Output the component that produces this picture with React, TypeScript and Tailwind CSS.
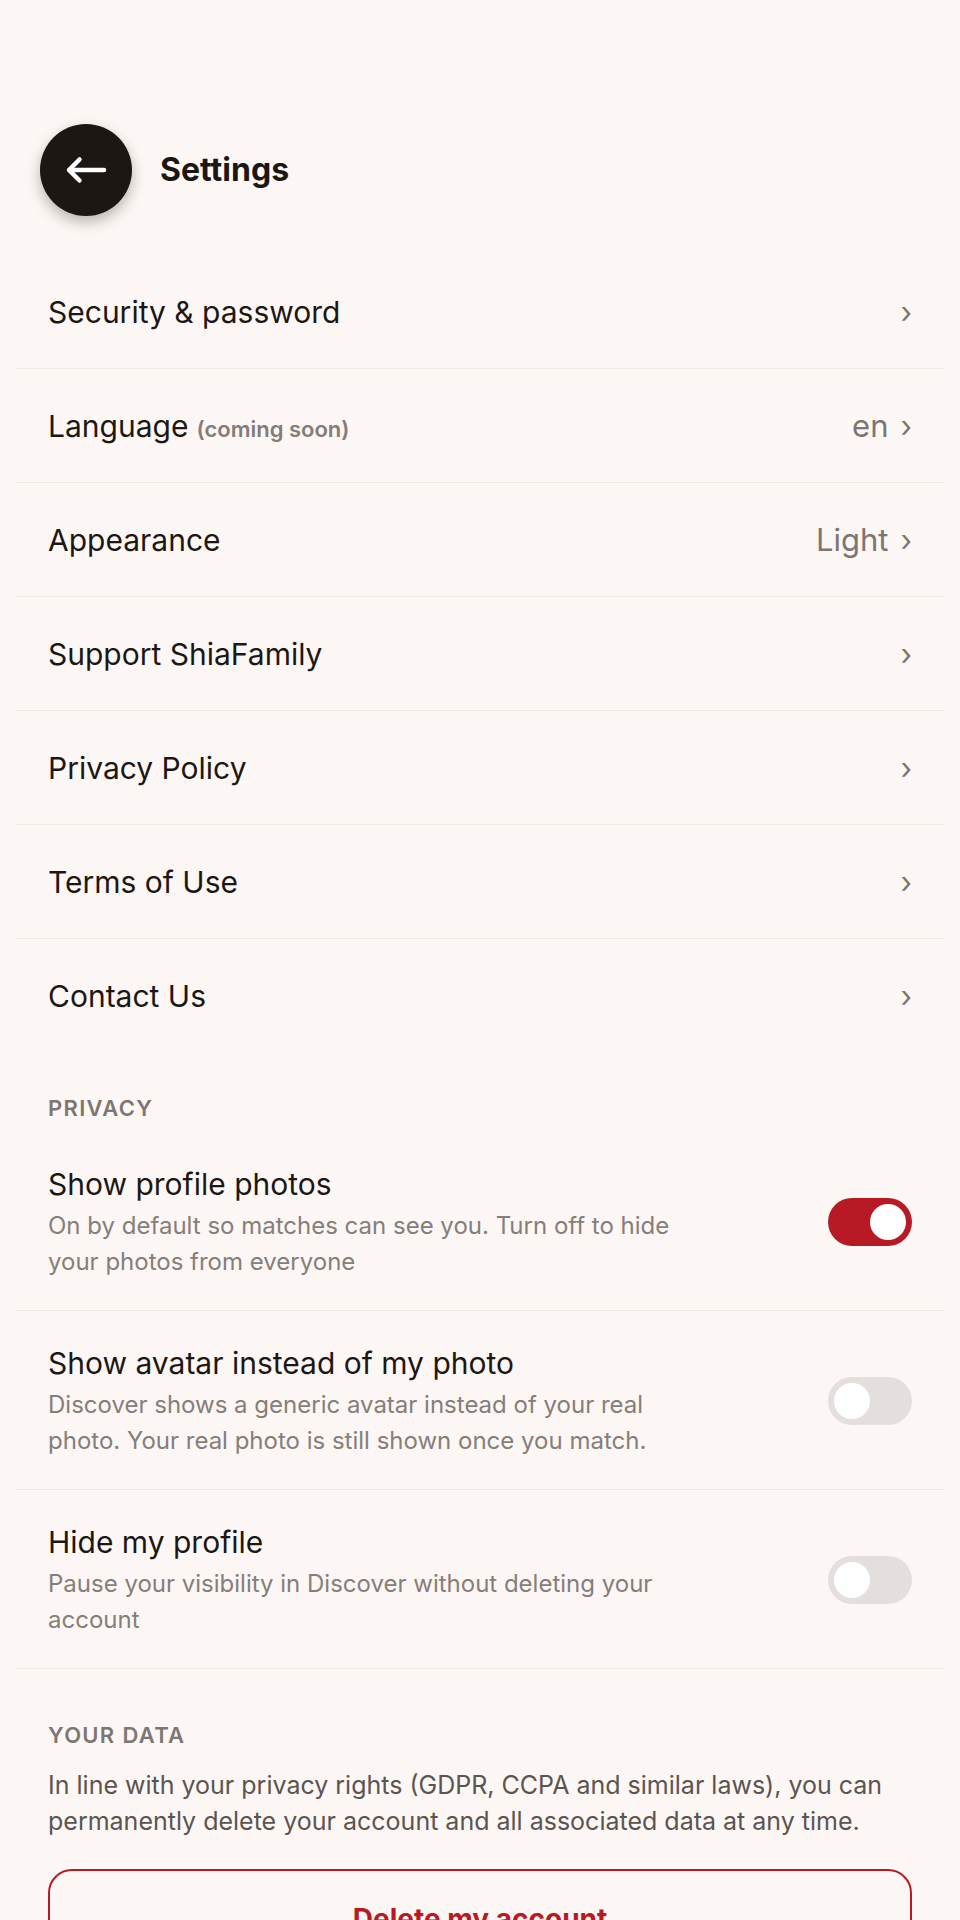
import { useState } from "react";

type NavItem = {
  label: string;
  note?: string;
  value?: string;
};

const navItems: NavItem[] = [
  { label: "Security & password" },
  { label: "Language", note: "(coming soon)", value: "en" },
  { label: "Appearance", value: "Light" },
  { label: "Support ShiaFamily" },
  { label: "Privacy Policy" },
  { label: "Terms of Use" },
  { label: "Contact Us" },
];

type PrivacyItem = {
  key: string;
  title: string;
  description: string;
};

const privacyItems: PrivacyItem[] = [
  {
    key: "photos",
    title: "Show profile photos",
    description:
      "On by default so matches can see you. Turn off to hide your photos from everyone",
  },
  {
    key: "avatar",
    title: "Show avatar instead of my photo",
    description:
      "Discover shows a generic avatar instead of your real photo. Your real photo is still shown once you match.",
  },
  {
    key: "hide",
    title: "Hide my profile",
    description:
      "Pause your visibility in Discover without deleting your account",
  },
];

function Toggle({ on, onChange }: { on: boolean; onChange: () => void }) {
  return (
    <button
      onClick={onChange}
      className={`flex h-12 w-[84px] shrink-0 items-center rounded-full p-1.5 ${
        on ? "justify-end bg-[#b71a25]" : "justify-start bg-[#e4dfdd]"
      }`}
    >
      <span className="h-9 w-9 rounded-full bg-white" />
    </button>
  );
}

export default function App() {
  const [toggles, setToggles] = useState<Record<string, boolean>>({
    photos: true,
    avatar: false,
    hide: false,
  });

  const flip = (k: string) => setToggles((t) => ({ ...t, [k]: !t[k] }));

  return (
    <div className="min-h-screen bg-[#fcf7f4] font-['Inter','Noto_Sans',sans-serif] text-[#1c1715]">
      <div className="flex items-center gap-7 pl-10 pt-[124px]">
        <button className="flex h-[92px] w-[92px] items-center justify-center rounded-full bg-[#1d1714] shadow-[0_6px_14px_rgba(40,25,20,0.3)]">
          <svg width="42" height="28" viewBox="0 0 42 28" fill="none">
            <path
              d="M39 14H4M14.5 3.5 4 14l10.5 10.5"
              stroke="white"
              strokeWidth="4.5"
              strokeLinecap="round"
              strokeLinejoin="round"
            />
          </svg>
        </button>
        <h1 className="text-[32px] font-bold">Settings</h1>
      </div>

      <div className="mx-4 mt-[39px]">
        {navItems.map((item, i) => (
          <div
            key={item.label}
            className={`flex h-[114px] items-center justify-between px-8 ${
              i < navItems.length - 1 ? "border-b border-[#efe8e5]" : ""
            }`}
          >
            <div className="flex items-baseline gap-2">
              <span className="text-[30px] leading-10">{item.label}</span>
              {item.note && (
                <span className="text-[22px] font-semibold text-[#847c78]">
                  {item.note}
                </span>
              )}
            </div>
            <div className="flex items-center gap-3 text-[#7c7571]">
              {item.value && (
                <span className="text-[31px] leading-10">{item.value}</span>
              )}
              <span className="text-[30px] leading-10">›</span>
            </div>
          </div>
        ))}

        <div className="px-8 pb-[10px] pt-[41px] text-[22px] font-semibold uppercase leading-7 tracking-[0.06em] text-[#7d7672]">
          Privacy
        </div>

        {privacyItems.map((item) => (
          <div
            key={item.key}
            className="flex items-center justify-between border-b border-[#efe8e5] px-8 pb-[30px] pt-8"
          >
            <div className="max-w-[640px]">
              <div className="text-[30px] leading-10">{item.title}</div>
              <p className="mt-1 text-[24px] leading-9 text-[#857e7a]">
                {item.description}
              </p>
            </div>
            <Toggle on={toggles[item.key]} onChange={() => flip(item.key)} />
          </div>
        ))}

        <div className="px-8 pt-[52px]">
          <div className="text-[22px] font-semibold uppercase leading-7 tracking-[0.06em] text-[#7d7672]">
            Your data
          </div>
          <p className="mt-[18px] text-[25px] leading-9 text-[#5b5451]">
            In line with your privacy rights (GDPR, CCPA and similar laws), you
            can permanently delete your account and all associated data at any
            time.
          </p>
          <button className="mt-[30px] w-full rounded-3xl border-2 border-[#b71a25] pb-[28px] pt-[28px] text-[28px] font-bold leading-10 text-[#b71a25]">
            Delete my account
          </button>
        </div>
      </div>
    </div>
  );
}
